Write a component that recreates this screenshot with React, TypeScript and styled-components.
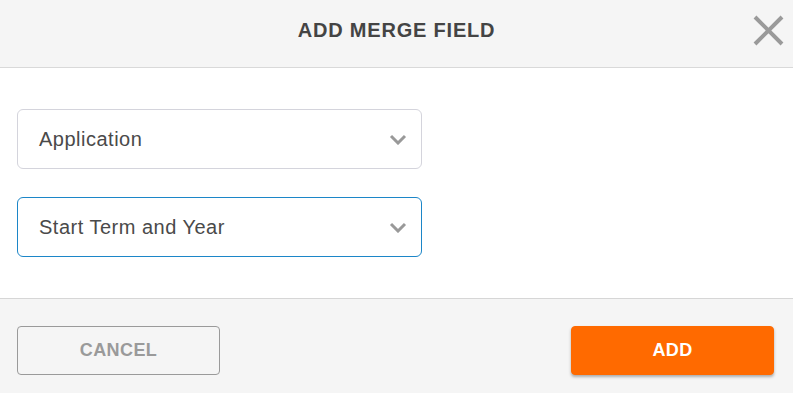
import React from "react";
import styled, { createGlobalStyle } from "styled-components";

const GlobalStyle = createGlobalStyle`
  html, body {
    margin: 0;
    padding: 0;
    background: #f5f5f5;
    font-family: "Liberation Sans", Arial, sans-serif;
  }
`;

const Modal = styled.div`
  width: 793px;
  height: 393px;
  display: flex;
  flex-direction: column;
  background: #fff;
  overflow: hidden;
`;

const Header = styled.header`
  height: 67px;
  display: grid;
  grid-template-columns: 1fr auto 1fr;
  align-items: center;
  background: #f5f5f5;
  border-bottom: 1px solid #d9d9d9;
  padding: 0 9px;
`;

const Title = styled.h1`
  grid-column: 2;
  margin: 0;
  padding-bottom: 6px;
  font-size: 20px;
  font-weight: 700;
  letter-spacing: 0.8px;
  color: #444;
`;

const CloseButton = styled.button`
  grid-column: 3;
  justify-self: end;
  width: 31px;
  height: 31px;
  padding: 0;
  margin-bottom: 6px;
  border: none;
  background: none;
  cursor: pointer;
  display: flex;
`;

const Body = styled.div`
  display: flex;
  flex-direction: column;
  gap: 28px;
  padding: 41px 17px 41px;
  background: #fff;
`;

const Select = styled.div<{ $focused?: boolean }>`
  width: 405px;
  height: 60px;
  box-sizing: border-box;
  display: flex;
  align-items: center;
  justify-content: space-between;
  padding: 0 14px 0 21px;
  border: 1px solid ${(p) => (p.$focused ? "#1c86c8" : "#d4d4dc")};
  border-radius: 6px;
  background: #fff;
  font-size: 20px;
  letter-spacing: 0.5px;
  color: #4a4a4a;
  cursor: pointer;
`;

const Footer = styled.footer`
  flex: 1;
  display: flex;
  align-items: flex-start;
  justify-content: space-between;
  padding: 27px 19px 0 17px;
  background: #f5f5f5;
  border-top: 1px solid #d6d6d6;
`;

const Button = styled.button<{ $primary?: boolean }>`
  width: 203px;
  height: 49px;
  border-radius: 4px;
  font-family: "Liberation Sans", Arial, sans-serif;
  font-size: 18px;
  font-weight: 700;
  letter-spacing: 0.4px;
  cursor: pointer;
  border: 1px solid ${(p) => (p.$primary ? "#ff6a00" : "#9a9a9a")};
  background: ${(p) => (p.$primary ? "#ff6a00" : "transparent")};
  color: ${(p) => (p.$primary ? "#fff" : "#9a9a9a")};
  box-shadow: ${(p) => (p.$primary ? "0 2px 3px rgba(0, 0, 0, 0.3)" : "none")};
`;

function Chevron() {
  return (
    <svg width="18" height="11" viewBox="0 0 18 11">
      <polyline
        points="2,2 9,9 16,2"
        fill="none"
        stroke="#999"
        strokeWidth="3"
      />
    </svg>
  );
}

function CloseIcon() {
  return (
    <svg width="31" height="31" viewBox="0 0 31 31">
      <path d="M2 2 L29 29 M29 2 L2 29" stroke="#9a9a9a" strokeWidth="4" />
    </svg>
  );
}

function App() {
  return (
    <>
      <GlobalStyle />
      <Modal>
        <Header>
          <Title>ADD MERGE FIELD</Title>
          <CloseButton aria-label="Close">
            <CloseIcon />
          </CloseButton>
        </Header>
        <Body>
          <Select role="combobox">
            Application
            <Chevron />
          </Select>
          <Select role="combobox" $focused>
            Start Term and Year
            <Chevron />
          </Select>
        </Body>
        <Footer>
          <Button>CANCEL</Button>
          <Button $primary>ADD</Button>
        </Footer>
      </Modal>
    </>
  );
}

export default App;
